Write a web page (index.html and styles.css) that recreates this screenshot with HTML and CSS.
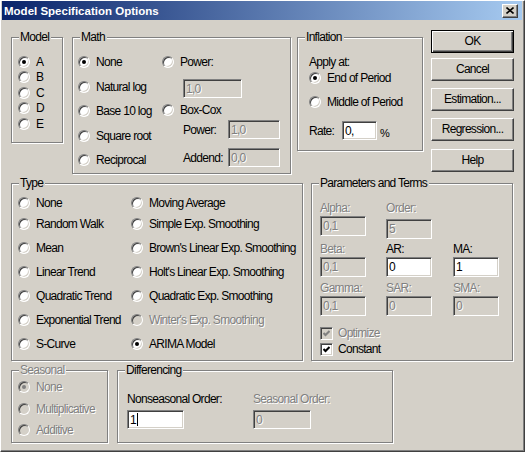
FILE: index.html
```html
<!DOCTYPE html>
<html>
<head>
<meta charset="utf-8">
<title>Model Specification Options</title>
<link rel="stylesheet" href="styles.css">
</head>
<body>
<div class="window">
  <div class="titlebar">
    <span class="title">Model Specification Options</span>
    <span class="close"><svg width="8" height="7" viewBox="0 0 8 7"><path d="M0.5 0.5L7.5 6.5M7.5 0.5L0.5 6.5" stroke="#000" stroke-width="1.6" fill="none"/></svg></span>
  </div>

  <div class="row row1">
    <div class="group g-model">
      <span class="legend">Model</span>
      <div class="opt"><span class="radio on"></span>A</div>
      <div class="opt"><span class="radio"></span>B</div>
      <div class="opt"><span class="radio"></span>C</div>
      <div class="opt"><span class="radio"></span>D</div>
      <div class="opt"><span class="radio"></span>E</div>
    </div>

    <div class="group g-math">
      <span class="legend">Math</span>
      <div class="math-c1">
        <div class="opt"><span class="radio on"></span>None</div>
        <div class="opt"><span class="radio"></span>Natural log</div>
        <div class="opt"><span class="radio"></span>Base 10 log</div>
        <div class="opt"><span class="radio"></span>Square root</div>
        <div class="opt"><span class="radio"></span>Reciprocal</div>
      </div>
      <div class="math-c2">
        <div class="opt"><span class="radio"></span>Power:</div>
        <div class="tb dis tb-pow">1,0</div>
        <div class="opt boxcox"><span class="radio"></span>Box-Cox</div>
        <div class="frow frow1"><span class="flbl">Power:</span><span class="tb dis tb-bc">1,0</span></div>
        <div class="frow frow2"><span class="flbl">Addend:</span><span class="tb dis tb-bc">0,0</span></div>
      </div>
    </div>

    <div class="group g-infl">
      <span class="legend">Inflation</span>
      <div class="apply">Apply at:</div>
      <div class="opt"><span class="radio on"></span>End of Period</div>
      <div class="opt mid"><span class="radio"></span>Middle of Period</div>
      <div class="rate">
        <span class="rate-lbl">Rate:</span>
        <span class="tb tb-rate">0,</span>
        <span class="pct">%</span>
      </div>
    </div>

    <div class="btns">
      <div class="btn btn-ok">OK</div>
      <div class="btn">Cancel</div>
      <div class="btn">Estimation...</div>
      <div class="btn">Regression...</div>
      <div class="btn btn-help">Help</div>
    </div>
  </div>

  <div class="row row2">
    <div class="group g-type">
      <span class="legend">Type</span>
      <div class="opt"><span class="radio"></span>None</div>
      <div class="opt"><span class="radio"></span>Random Walk</div>
      <div class="opt"><span class="radio"></span>Mean</div>
      <div class="opt"><span class="radio"></span>Linear Trend</div>
      <div class="opt"><span class="radio"></span>Quadratic Trend</div>
      <div class="opt"><span class="radio"></span>Exponential Trend</div>
      <div class="opt"><span class="radio"></span>S-Curve</div>
      <div class="opt"><span class="radio"></span>Moving Average</div>
      <div class="opt"><span class="radio"></span>Simple Exp. Smoothing</div>
      <div class="opt"><span class="radio"></span>Brown's Linear Exp. Smoothing</div>
      <div class="opt"><span class="radio"></span>Holt's Linear Exp. Smoothing</div>
      <div class="opt"><span class="radio"></span>Quadratic Exp. Smoothing</div>
      <div class="opt dis"><span class="radio off"></span>Winter's Exp. Smoothing</div>
      <div class="opt"><span class="radio on"></span>ARIMA Model</div>
    </div>

    <div class="group g-params">
      <span class="legend">Parameters and Terms</span>
      <div class="prow">
        <div class="pf pf1"><span class="plbl dis">Alpha:</span><span class="tb dis ptb">0,1</span></div>
        <div class="pf pf2"><span class="plbl dis">Order:</span><span class="tb dis ptb ptb-order">5</span></div>
      </div>
      <div class="prow prow2">
        <div class="pf pf1"><span class="plbl dis">Beta:</span><span class="tb dis ptb">0,1</span></div>
        <div class="pf pf2"><span class="plbl">AR:</span><span class="tb ptb">0</span></div>
        <div class="pf pf3"><span class="plbl">MA:</span><span class="tb ptb">1</span></div>
      </div>
      <div class="prow prow3">
        <div class="pf pf1"><span class="plbl dis">Gamma:</span><span class="tb dis ptb">0,1</span></div>
        <div class="pf pf2"><span class="plbl dis">SAR:</span><span class="tb dis ptb">0</span></div>
        <div class="pf pf3"><span class="plbl dis">SMA:</span><span class="tb dis ptb">0</span></div>
      </div>
      <div class="opt chk-first dis"><span class="check off"><svg width="7" height="7" viewBox="0 0 7 7"><polyline points="0.5,3 2.5,5 6.5,1" stroke="#808080" stroke-width="2" fill="none"/></svg></span>Optimize</div>
      <div class="opt"><span class="check"><svg width="7" height="7" viewBox="0 0 7 7"><polyline points="0.5,3 2.5,5 6.5,1" stroke="#000" stroke-width="2" fill="none"/></svg></span>Constant</div>
    </div>
  </div>

  <div class="row row3">
    <div class="group g-seas">
      <span class="legend dis">Seasonal</span>
      <div class="opt dis"><span class="radio off on"></span>None</div>
      <div class="opt dis"><span class="radio off"></span>Multiplicative</div>
      <div class="opt dis"><span class="radio off"></span>Additive</div>
    </div>
    <div class="group g-diff">
      <span class="legend">Differencing</span>
      <div class="dfield dfield1">
        <span class="dlbl">Nonseasonal Order:</span>
        <span class="tb dtb">1<span class="caret"></span></span>
      </div>
      <div class="dfield">
        <span class="dlbl dis">Seasonal Order:</span>
        <span class="tb dis dtb dtb2">0</span>
      </div>
    </div>
  </div>
</div>
</body>
</html>
```

FILE: styles.css
```css
* { box-sizing: border-box; }

body {
  margin: 0;
  background: #d4d0c8;
  font-family: "Liberation Sans", Arial, sans-serif;
  font-size: 12px;
  letter-spacing: -0.7px;
  color: #000;
}

.window {
  width: 525px;
  height: 452px;
  background: #d4d0c8;
  border-top: 1px solid #fff;
  border-left: 1px solid #fff;
  border-right: 1px solid #404040;
  border-bottom: 1px solid #404040;
  box-shadow: inset -1px -1px 0 #808080;
  overflow: hidden;
}

.titlebar {
  height: 19px;
  margin: 0 2px 0 1px;
  padding: 0 4px 0 2px;
  background: linear-gradient(to right, #0a246a, #a6caf0);
  display: flex;
  align-items: center;
  justify-content: space-between;
}

.title {
  color: #fff;
  font-family: "Liberation Sans", Arial, sans-serif;
  font-weight: bold;
  font-size: 11.5px;
  letter-spacing: 0;
}

.close {
  width: 16px;
  height: 14px;
  background: #d4d0c8;
  border: 1px solid;
  border-color: #fff #404040 #404040 #fff;
  box-shadow: inset -1px -1px 0 #808080;
  display: flex;
  align-items: center;
  justify-content: center;
}

.row { display: flex; align-items: flex-start; }
.row1 { margin-top: 17px; height: 146px; }
.row2 { height: 187px; }
.row3 { height: 73px; }

.group {
  position: relative;
  flex: none;
  border: 1px solid #808080;
  box-shadow: inset 1px 1px 0 #fff, 1px 1px 0 #fff;
}

.legend {
  position: absolute;
  top: -7px;
  left: 7px;
  padding: 0 2px 0 1px;
  background: #d4d0c8;
  line-height: 13px;
  white-space: nowrap;
}

.dis { color: #808080; text-shadow: 1px 1px 0 #fff; }

.opt {
  display: flex;
  align-items: center;
  height: 16px;
  line-height: 16px;
  white-space: nowrap;
}

.radio {
  position: relative;
  flex: none;
  width: 12px;
  height: 12px;
  margin-right: 6px;
  border-radius: 50%;
  border: 1px solid;
  border-color: #808080 #fff #fff #808080;
  background: #fff;
  box-shadow: inset 1px 1px 0 #404040, inset -1px -1px 0 #d4d0c8;
}
.radio.on::after {
  content: "";
  position: absolute;
  left: 3px;
  top: 3px;
  width: 4px;
  height: 4px;
  border-radius: 50%;
  background: #000;
}
.radio.off { background: #d4d0c8; }
.radio.off.on::after { background: #808080; }

.check {
  flex: none;
  width: 13px;
  height: 13px;
  margin-right: 5px;
  border: 1px solid;
  border-color: #808080 #fff #fff #808080;
  background: #fff;
  box-shadow: inset 1px 1px 0 #404040, inset -1px -1px 0 #d4d0c8;
  display: flex;
  align-items: center;
  justify-content: center;
}
.check.off { background: #d4d0c8; }
.check svg { display: block; }

.tb {
  display: flex;
  align-items: center;
  height: 19px;
  padding-left: 2px;
  border: 1px solid;
  border-color: #808080 #fff #fff #808080;
  box-shadow: inset 1px 1px 0 #404040, inset -1px -1px 0 #d4d0c8;
  background: #fff;
  color: #000;
  line-height: 14px;
  white-space: nowrap;
}
.tb.dis { background: #d4d0c8; color: #808080; }

.caret {
  display: inline-block;
  width: 1px;
  height: 13px;
  margin-left: 1px;
  background: #000;
}

/* Model */
.g-model {
  margin-left: 10px;
  width: 52px;
  height: 106px;
  padding: 16px 0 0 6px;
}
.g-model .opt { height: 15.5px; }

/* Math */
.g-math {
  margin-left: 9px;
  width: 219px;
  height: 137px;
  padding: 16px 0 0 5px;
  display: flex;
}
.math-c1 {
  width: 84px;
  display: flex;
  flex-direction: column;
  gap: 8.5px;
}
.math-c2 { display: flex; flex-direction: column; }
.tb-pow { width: 59px; margin: 9px 0 0 21px; }
.boxcox { margin-top: 4px; }
.frow { display: flex; align-items: center; margin-left: 21px; }
.frow1 { margin-top: 2px; }
.frow2 { margin-top: 9px; }
.flbl { width: 45px; }
.tb-bc { width: 52px; }

/* Inflation */
.g-infl {
  margin-left: 6px;
  width: 126px;
  height: 114px;
  padding: 16px 0 0 11px;
}
.apply { line-height: 16px; height: 16px; }
.mid { margin-top: 8px; }
.rate { display: flex; align-items: center; margin-top: 11px; }
.rate-lbl { width: 33px; }
.tb-rate { width: 35px; }
.pct { margin-left: 3px; padding-top: 5px; font-size: 11px; }

/* Buttons */
.btns {
  margin-left: 8px;
  margin-top: -7px;
  width: 83px;
  display: flex;
  flex-direction: column;
  gap: 7px;
}
.btn {
  height: 23px;
  border: 1px solid;
  border-color: #fff #404040 #404040 #fff;
  box-shadow: inset -1px -1px 0 #808080;
  background: #d4d0c8;
  text-align: center;
  line-height: 21px;
}
.btn-ok {
  border-color: #000;
  box-shadow: inset 1px 1px 0 #fff, inset -1px -1px 0 #404040, inset -2px -2px 0 #808080;
  margin-bottom: -2px;
}
.btn-help { margin-top: 1px; }

/* Type */
.g-type {
  margin-left: 10px;
  width: 292px;
  height: 178px;
  padding: 11px 0 0 6px;
  display: grid;
  grid-template-columns: 113px auto;
  grid-template-rows: 21px repeat(6, 24px);
  grid-auto-flow: column;
  align-content: start;
}

/* Parameters */
.g-params {
  margin-left: 8px;
  width: 202px;
  height: 178px;
  padding: 18px 0 0 8px;
}
.prow { display: flex; height: 34px; align-items: flex-start; }
.prow2 { margin-top: 7px; }
.prow3 { margin-top: 5px; }
.pf { display: flex; flex-direction: column; }
.pf1 { width: 66px; }
.pf2 { width: 67px; }
.pf3 { width: 46px; }
.plbl { line-height: 13px; height: 13px; margin-bottom: 1px; }
.ptb { width: 46px; height: 20px; }
.ptb-order { margin-top: 3px; }
.chk-first { margin-top: 9px; }

/* Seasonal */
.g-seas {
  margin-left: 10px;
  width: 97px;
  height: 73px;
  padding: 8px 0 0 6px;
  display: flex;
  flex-direction: column;
  gap: 5.5px;
}

/* Differencing */
.g-diff {
  margin-left: 9px;
  width: 276px;
  height: 73px;
  padding: 22px 0 0 9px;
  display: flex;
}
.dfield { display: flex; flex-direction: column; }
.dfield1 { width: 126px; }
.dlbl { line-height: 13px; height: 13px; }
.dtb { width: 57px; margin-top: 4px; }
.dtb2 { width: 58px; }
```
